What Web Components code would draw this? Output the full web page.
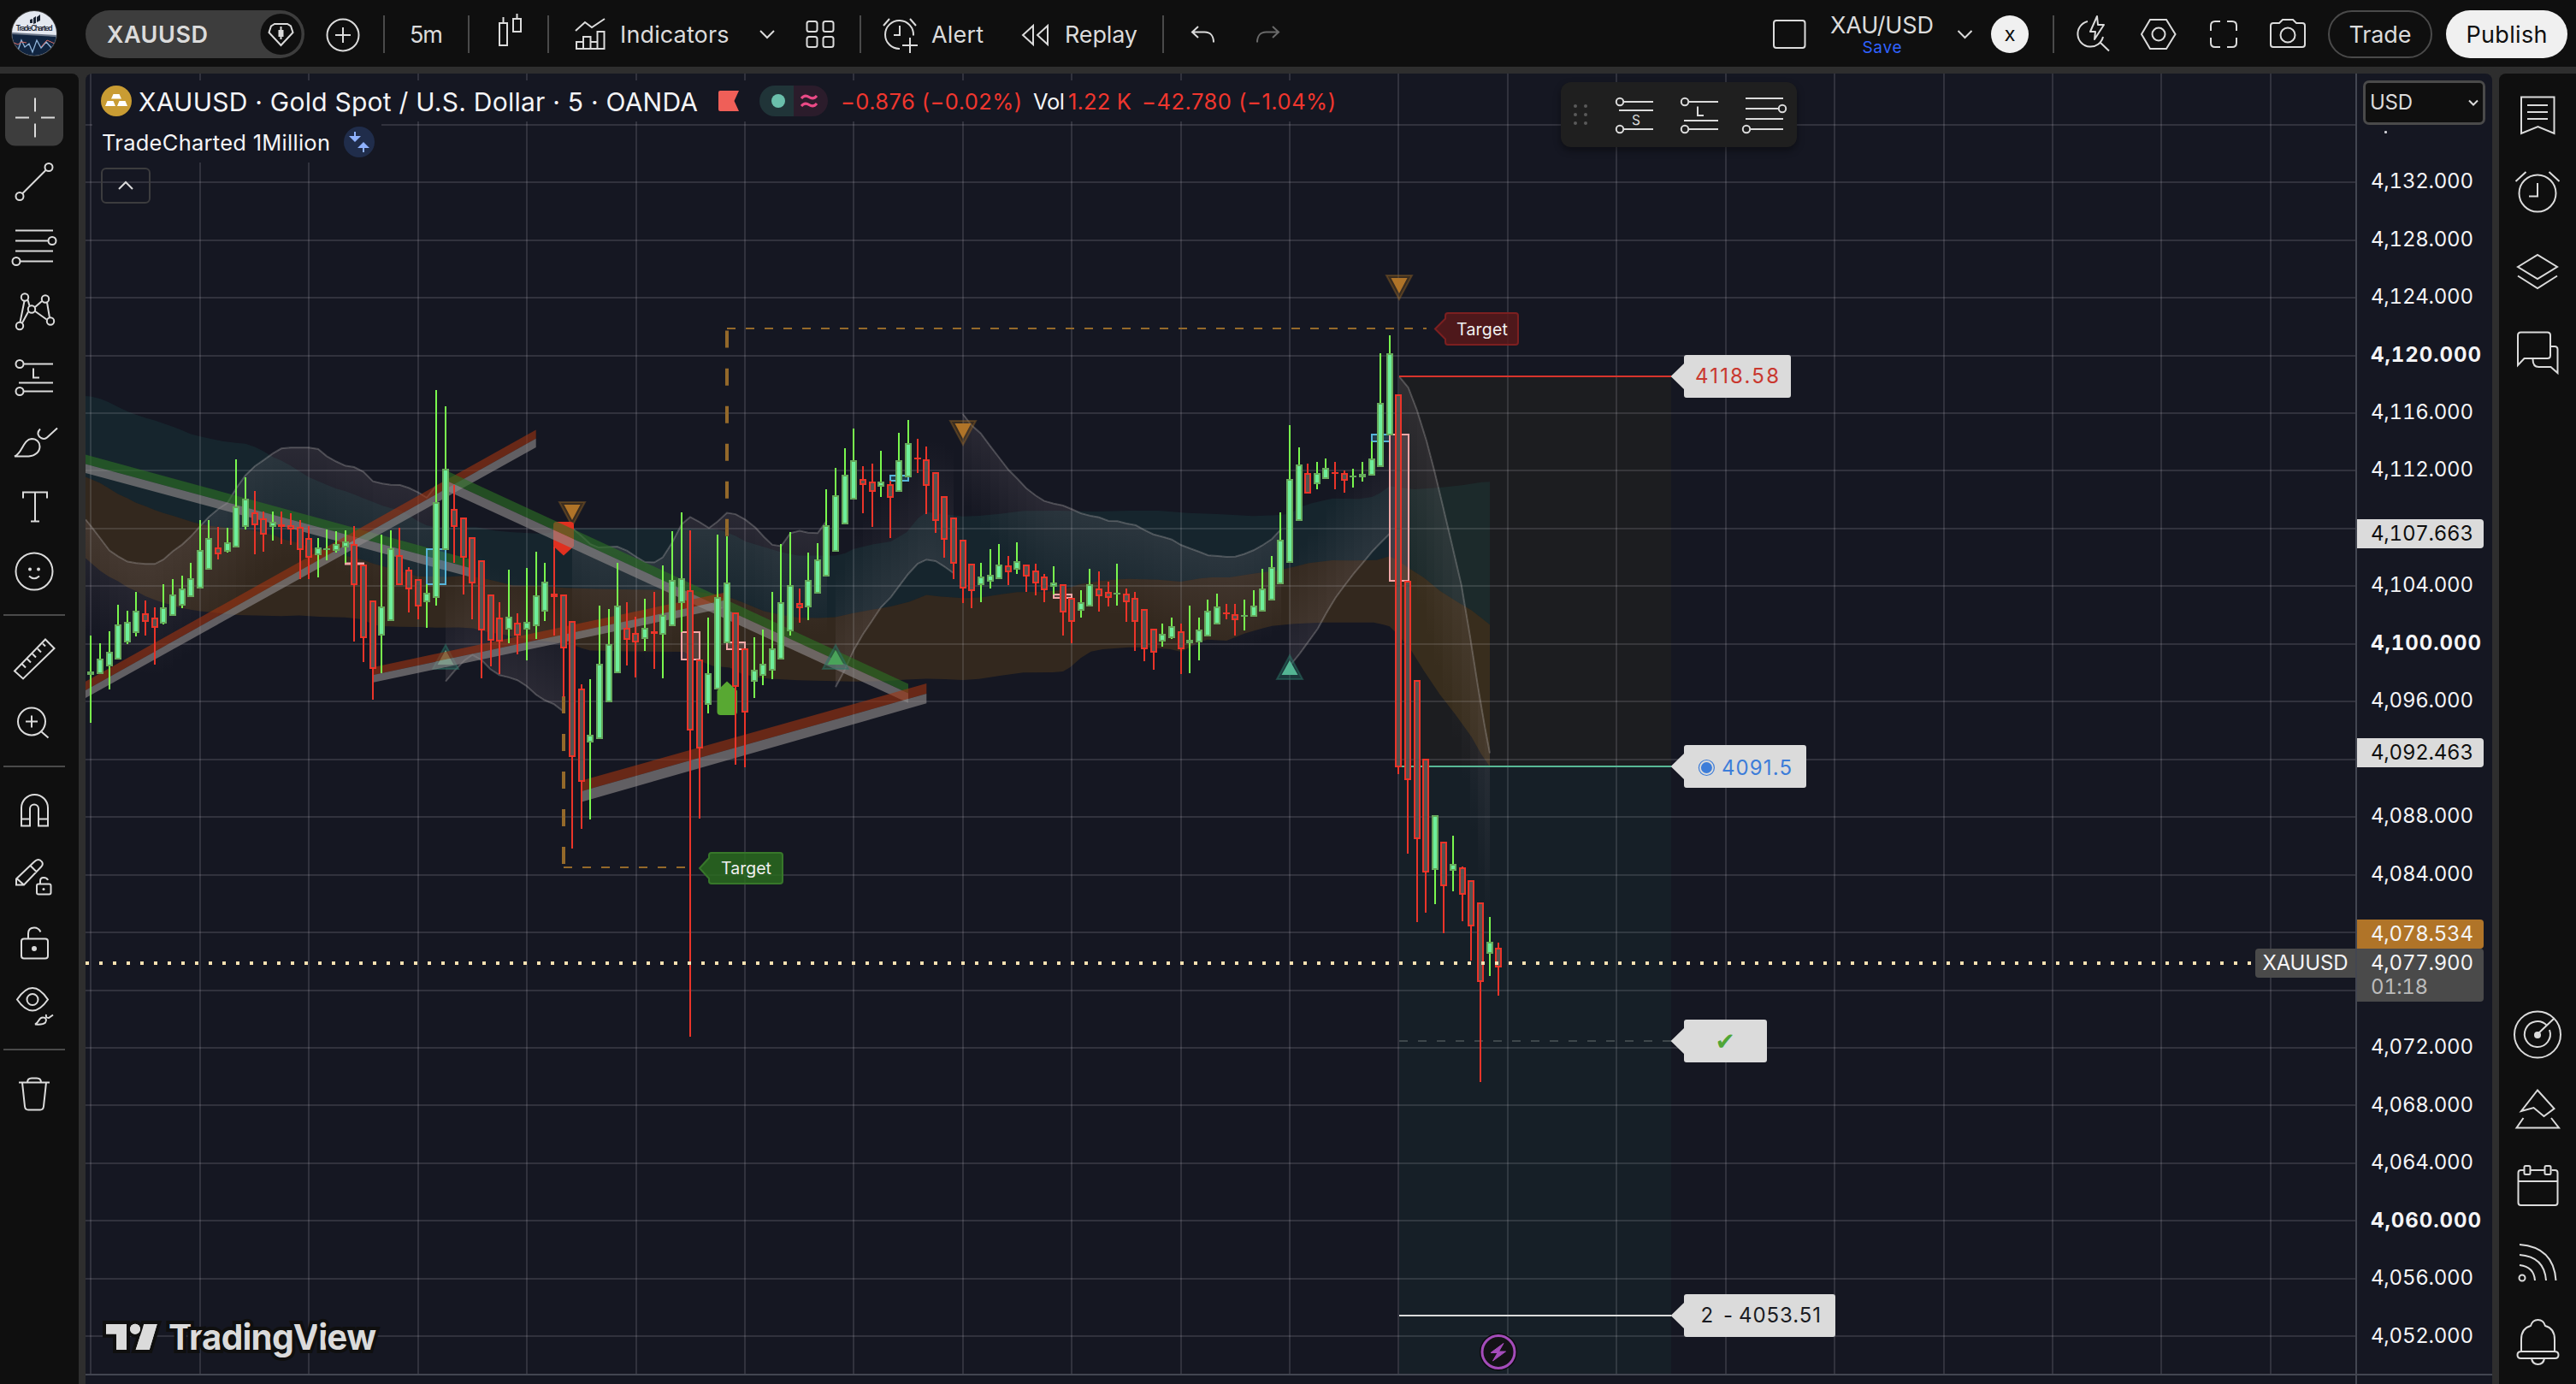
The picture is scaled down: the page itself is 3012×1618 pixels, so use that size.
<!DOCTYPE html>
<html lang="en">
<head>
<meta charset="utf-8">
<title>XAUUSD chart</title>
<style>
html,body{margin:0;padding:0;background:#2e2e2e}
body{width:3012px;height:1618px;overflow:hidden;font-family:Inter,"Liberation Sans",sans-serif;color:#dbdbdb}
</style>
</head>
<body>
<trading-app></trading-app>
<script>
/* ---------- text that keeps a fixed advance width ---------- */
class FitText extends HTMLElement{
  connectedCallback(){
    if(this.shadowRoot)return;
    this.attachShadow({mode:'open'}).innerHTML=`<style>
      :host{display:block;white-space:nowrap;flex:none;line-height:1.2}
      span{display:inline-block}</style><span><slot></slot></span>`;
    const w=+this.getAttribute('w'),n=this.textContent.length;
    if(!w)return;
    const s=this.shadowRoot.querySelector('span');
    const nat=s.getBoundingClientRect().width;
    this.style.width=w+'px';
    s.style.letterSpacing=((w-nat)/Math.max(1,n-1)).toFixed(3)+'px';
  }
}
customElements.define('fit-text',FitText);

/* ---------- icons: [viewBox, markup] ---------- */
const chev=(x,y,r=8)=>`<path d="M${x-r} ${y-r/2}L${x} ${y+r/2}L${x+r} ${y-r/2}"/>`;
const ICONS={
  avatar:['12 12 56 56',`<defs><clipPath id="c"><circle cx="40" cy="40" r="26"/></clipPath></defs>
    <circle cx="40" cy="40" r="27" fill="#3a3a3a" stroke="none"/>
    <g clip-path="url(#c)" stroke="none"><rect x="12" y="12" width="56" height="56" fill="#e4e8f0"/>
    <path d="M12 39L68 44V70H12Z" fill="#10243f"/><path d="M12 39L68 42V44L12 41Z" fill="#6b7688"/>
    <path d="M16 56l5 4 4-12 4 8 5-4 4 10 5-14 5 9 6-7 7 8" fill="none" stroke="#8fb3d8" stroke-width="1.3"/>
    <path d="M14 50l7 3 4-3 6 1M48 56l7-8 9 4" fill="none" stroke="#d86a62" stroke-width="1"/>
    <path d="M35 28v-4l3-1v5zM39 29v-7l3-2v8zM43 27v-6l4-3v7z" fill="#1a2230"/></g>
    <text x="18.500" y="37" font-size="8.500" font-weight="600" textLength="43" fill="#1c2534" stroke="none">TradeCharted</text>`],
  diamond:['304 12 50 56',`<circle cx="328.5" cy="40" r="24" fill="#0f0f0f" stroke="none"/><path d="M317 30.500l4-2.500h15l4 2.500 2.500 7.500-14 15-14-15z"/><rect x="325.500" y="35" width="6" height="8" fill="#dbdbdb" stroke="none"/><path d="M328.500 31v15"/>`],
  plus:['380 0 42 78','<circle cx="401" cy="41" r="18.500"/><path d="M392 41h18M401 32v18"/>'],
  candles:['580 0 32 78','<rect x="584" y="27" width="9" height="26"/><path d="M588.500 27v-7M604.500 22v-6"/><rect x="600" y="22" width="9" height="15"/>'],
  indicators:['670 0 40 78','<path d="M673 36l11-10 8 6 15-10M674 57V49h8V43h8.500V49h8V37h8v20zM682 57v-8M690.500 57v-8M698.500 57v-8"/>'],
  chevA:['888 0 18 78',chev(897,40)],
  grid:['942 0 35 78','<rect x="943.500" y="25" width="12" height="12" rx="2.500"/><rect x="962.500" y="25" width="12" height="12" rx="2.500"/><rect x="943.500" y="43" width="12" height="12" rx="2.500"/><rect x="962.500" y="43" width="12" height="12" rx="2.500"/>'],
  alert:['1030 0 46 78','<path d="M1068 41.500A16.500 16.500 0 1 0 1052 57M1045 41h7V30M1033 30l7-8M1071 30l-7-8M1064 44v18M1055 53h18"/>'],
  replay:['1194 0 33 78','<path d="M1208 30v22l-12-11zM1225 30v22l-12-11z"/>'],
  undo:['1392 0 30 78','<path d="M1401 31l-7 6.500 7 6.500M1394.500 37.500h14c7 0 10.500 5 10.500 12"/>'],
  redo:['1468 0 30 78','<g stroke="#6a6a6a"><path d="M1488 31l7 6.500-7 6.500M1494.500 37.500h-14c-7 0-10.500 5-10.500 12"/></g>'],
  square:['2072 0 40 78','<rect x="2074" y="24" width="36.500" height="32" rx="3"/>'],
  chevB:['2288 0 18 78',chev(2297.5,40)],
  flash:['2428 0 38 78','<path d="M2441 25a15 15 0 1 0 18 18M2455 49l11 10.500"/><path d="M2452 19l-8 18h6l-1 9 11-17h-7z" stroke-linejoin="round"/>'],
  hex:['2502 0 43 78','<path d="M2514 23h19l10.500 17-10.500 17h-19l-10-17z"/><circle cx="2524" cy="40" r="7.500"/>'],
  full:['2583 0 34 78','<path d="M2585 36v-6q0-5 5-5h6M2604 25h6q5 0 5 5v6M2615 44v6q0 5-5 5h-6M2596 55h-6q-5 0-5-5v-6"/>'],
  camera:['2653 0 44 78','<path d="M2655 30q0-3 3-3h7l4-4h12l4 4h7q3 0 3 3v22q0 3-3 3h-34q-3 0-3-3z"/><circle cx="2675" cy="41" r="8.500"/>'],

  cross:['0 98.500 92 76','<rect x="6" y="102" width="68" height="68" rx="12" fill="#3d3d3d" stroke="none"/><path d="M18 137h16M48 137h16M41 114v16M41 144v16"/>'],
  trend:['0 174.500 92 76','<circle cx="57" cy="195" r="4.500"/><circle cx="23" cy="229" r="4.500"/><path d="M26 226l28-28"/>'],
  fib:['0 250.500 92 76','<path d="M18 269h44M18 281h38M18 293h44M24 305h38"/><circle cx="61" cy="281" r="4.500"/><circle cx="19" cy="305" r="4.500"/>'],
  pattern:['0 326.500 92 76','<g><path d="M23.500 376L28.500 351.500M32.500 350l2 7M33 364L26 377M41 358.500l8-7M55 353l3 18M40.500 363l14 10"/><circle cx="29" cy="347" r="4.200"/><circle cx="53" cy="349" r="4.200"/><circle cx="37" cy="361" r="4.200"/><circle cx="23" cy="380.500" r="4.200"/><circle cx="59" cy="375" r="4.200"/></g>'],
  long:['0 402.500 92 76','<circle cx="23" cy="425" r="4.500"/><circle cx="23" cy="457" r="4.500"/><path d="M28 425h34M22 447h40M28 457h34M39 430v11h7"/>'],
  brush:['0 478.500 92 76','<path d="M17 533c9-3 10-20 20-20.500 6 0 9.500 4 9.500 9 0 6-5 11-13 11.500zM47 501c-4 4-3 8 1 10.500 3 1.500 5 1.500 7-.5l12-11"/>'],
  text:['0 554.500 92 76','<path d="M27 582v-7h28v7M41 575v34M36 609h10"/>'],
  smile:['0 630.500 92 76','<circle cx="40" cy="667.500" r="21.500"/><path d="M34 673q6 5.500 12 0"/><circle cx="35" cy="665" r="2" fill="#dbdbdb" stroke="none"/><circle cx="45" cy="665" r="2" fill="#dbdbdb" stroke="none"/>'],
  ruler:['0 731.500 92 76','<path d="M17 784l36-37 10.500 10.500-36.500 35.500zM26 776l4 4M32 770l4 4M38 764l4 4M44 758l4 4M50 752l3 3"/>'],
  zoomin:['0 807.500 92 76','<circle cx="37" cy="843" r="16"/><path d="M30 843h14M37 836v14M48.500 855l8 7"/>'],
  magnet:['0 908.500 92 76','<path d="M25 965V944a15.500 15.500 0 0 1 31 0v21H45v-20a5 5 0 0 0-10 0v20zM25 957h10M45 957h11"/>'],
  pencil:['0 984.500 92 76','<path d="M19 1034v-7l21-20q5-5 9 0 2 3-1 6l-20 21zM35 1011l8 8M19 1026l9 8"/><rect x="43" y="1033" width="16.500" height="12" rx="2"/><path d="M47 1033v-3.500q0-4 4-4t5 3"/><circle cx="51" cy="1039" r="1.500" fill="#dbdbdb" stroke="none"/>'],
  lock:['0 1060.500 92 76','<rect x="25" y="1097" width="31" height="23" rx="3"/><path d="M33 1097v-6q0-7 7-7 5 0 7.500 5"/><circle cx="40" cy="1108.500" r="3" fill="#dbdbdb" stroke="none"/>'],
  eye:['0 1136.500 92 76','<path d="M20 1168q18-27 36 0q-18 26-36 0z"/><circle cx="38" cy="1168" r="6.500"/><path d="M41 1197c5-2 4-8 9-8 4 0 5 3 3 6-2 2-6 2.500-12 2zM54 1185.500q-1 4 3 4l5-3.500"/>'],
  trash:['0 1239.500 92 76','<path d="M22 1265h36M32 1265q0-5 5-5h6q5 0 5 5M26 1265l3 28q.5 4 4 4h14q3.500 0 4-4l3-28"/>'],

  watch:['2922 98 90 74','<path d="M2948 113.500h38.500V156l-19-8-19.500 8zM2955 123h24M2955 131h24M2955 139h24"/>'],
  clock:['2922 187 90 74','<circle cx="2967" cy="226" r="21.500"/><path d="M2957 229.500h10V214M2941.500 212l12-11M2992.500 212l-12-11"/>'],
  layers:['2922 280 90 74','<path d="M2944 312l23-14 23 14-23 14zM2944 322.500l23 14.500 23-14.500"/>'],
  chat:['2922 374 90 74','<path d="M2944 427V392q0-3.500 3.500-3.500h31q3.500 0 3.500 3.500v23.500q0 3.500-3.500 3.500h-27zM2983 405h4q3.500 0 3.500 3.500V436l-8-7h-14q-7 0-7-9"/>'],
  radar:['2922 1172 90 74','<circle cx="2967" cy="1209.500" r="27"/><path d="M2986.500 1190.500l-20 19M2978 1199a15 15 0 1 0 3 5"/><circle cx="2967" cy="1210" r="4" fill="#dbdbdb" stroke="none"/>'],
  shapes:['2922 1260 90 74','<path d="M2967 1274.500l19.500 21.500-12 9-12-10-14.500 4zM2950.500 1307l-8 11.500h49.500l-9-11.500"/>'],
  calendar:['2922 1350 90 74','<path d="M2951.500 1368h-4q-3 0-3 3v35q0 3 3 3h40q3 0 3-3v-35q0-3-3-3h-4M2958.500 1368h17M2944.500 1381h46"/><rect x="2951.500" y="1363" width="7" height="10" rx="1.500"/><rect x="2975.500" y="1363" width="7" height="10" rx="1.500"/>'],
  rss:['2922 1440 90 74','<circle cx="2949" cy="1494" r="3.500"/><path d="M2946 1479q17 2 18 18M2946 1467q29 2 31 30M2946 1455q40 3 42.500 42"/>'],
  bell:['2922 1532 90 74','<path d="M2948 1580v-14q0-13 11-16 2-7 8.500-7t8.500 7q11 3 11 16v14M2948 1580q-4.500 0-4.500 4t4 4h40q4 0 4-4t-4.500-4zM2960 1588q1 7 7.500 7t7.500-7"/>'],

  grip:['1839 110 18 48','<g fill="#5a5a5a" stroke="none">'+[124,134,144].map(y=>`<circle cx="1842" cy="${y}" r="2"/><circle cx="1854" cy="${y}" r="2"/>`).join('')+'</g>'],
  shortpos:['1886 110 50 48','<circle cx="1894" cy="119" r="4.200"/><circle cx="1894" cy="151" r="4.200"/><path d="M1898 119h35M1893 129h40M1898 151h35"/><text x="1908" y="145.500" font-size="15.500" fill="#dbdbdb" stroke="none">S</text>'],
  longpos:['1962 110 50 48','<circle cx="1970" cy="119" r="4.200"/><circle cx="1970" cy="151" r="4.200"/><path d="M1974 119h35M1969 141h40M1974 151h35M1985 124.500v10.500h7"/>'],
  fibset:['2037 110 54 48','<path d="M2041 115h44M2041 127h38M2041 139h44M2047 151h38"/><circle cx="2084" cy="127" r="4.200"/><circle cx="2042" cy="151" r="4.200"/>'],

  gold:['118 100 36 36','<circle cx="136" cy="118" r="18" fill="#c99c33" stroke="none"/><path d="M132.500 110h7l2.500 5.500h-12zM125.500 118h7l2.500 6h-12zM139.500 118h7l2.500 6h-12z" fill="#fff" stroke="none"/>'],
  flag:['840 105 24 26','<path d="M842 106h22l-5.500 12 5.500 12h-22q-2 0-2-2v-20q0-2 2-2z" fill="#ef5f58" stroke="none"/>'],
  market:['888 100 80 36','<path d="M928 100h-22a18 18 0 0 0 0 36h22z" fill="#203438" stroke="none"/><path d="M928 100h22a18 18 0 0 1 0 36h-22z" fill="#2b1c2b" stroke="none"/><circle cx="910" cy="118" r="8" fill="#6abfab" stroke="none"/><path d="M937 115q4-5 9-1.500t9-1.500M937 124q4-5 9-1.500t9-1.500" stroke="#ea4a86" stroke-width="3"/>'],
  sync:['402 148 36 36','<circle cx="420" cy="166" r="18" fill="#202d4b" stroke="none"/><path d="M415 154v6M425 178v-6" stroke="#8fb2ff"/><path d="M408 159h14l-7 7zM418 173h14l-7-7z" fill="#8fb2ff" stroke="none"/>'],
  up:['118 196 58 42','<path d="M139 221l8-8 8 8"/>'],
  downS:['2884 110 14 20',chev(2891,120,5)]
};
class TvIcon extends HTMLElement{
  connectedCallback(){
    const [box,body]=ICONS[this.getAttribute('name')],[,,w,h]=box.split(' ');
    this.attachShadow({mode:'open'}).innerHTML=`<style>:host{display:block;flex:none;width:${w}px;height:${h}px}
      svg{display:block;overflow:visible;fill:none;stroke:#dbdbdb;stroke-width:2}</style>
      <svg width="${w}" height="${h}" viewBox="${box}">${body}</svg>`;
  }
}
customElements.define('tv-icon',TvIcon);

/* ---------- top bar ---------- */
const item=(gap,html)=>`<div style="margin-left:${gap}px">${html}</div>`;
const ic=(gap,n)=>item(gap,`<tv-icon name="${n}"></tv-icon>`);
const tx=(gap,w,t)=>item(gap,`<fit-text w="${w}">${t}</fit-text>`);
const sep=gap=>`<i style="margin-left:${gap}px"></i>`;
class TopBar extends HTMLElement{
  connectedCallback(){
    this.attachShadow({mode:'open'}).innerHTML=`<style>
    :host{display:flex;align-items:center;height:78px;background:#0f0f0f;font-size:27px;color:#dbdbdb}
    :host>div{flex:none}
    fit-text{padding-top:4px}
    i{flex:none;width:2px;height:44px;background:#4a4a4a;margin-top:2px}
    .pill{display:flex;align-items:center;width:256px;height:56px;border-radius:28px;background:#3d3d3d;box-sizing:border-box;padding-left:25px;font-weight:600;margin-top:2px}
    .pill fit-text,.btn fit-text{padding-top:2px}
    .pill tv-icon{margin-left:61px}
    .name{display:flex;flex-direction:column;align-items:center}
    .name .s{font-size:19px;color:#2f62ff;margin-top:-2px;padding:0}
    .x{width:44px;height:44px;border-radius:50%;background:#f0f0f0;color:#0f0f0f;font-size:24px;display:flex;align-items:center;justify-content:center;line-height:1;margin-top:2px}
    .btn{height:56px;border-radius:28px;box-sizing:border-box;display:flex;align-items:center;justify-content:center;margin-top:2px}
    .t{width:122px;border:2px solid #4a4a4a}.p{width:142px;background:#f0f0f0;color:#0f0f0f}
    </style>`+
    ic(12,'avatar')+item(32,`<div class="pill"><fit-text w="118">XAUUSD</fit-text><tv-icon name="diamond"></tv-icon></div>`)+
    ic(24,'plus')+sep(26)+tx(29,39,'5m')+sep(29)+ic(31,'candles')+sep(28)+ic(28,'indicators')+tx(15,127.5,'Indicators')+
    ic(35.5,'chevA')+ic(36,'grid')+sep(28)+ic(23,'alert')+tx(13,61,'Alert')+ic(44,'replay')+tx(18,85,'Replay')+sep(29)+
    ic(31,'undo')+ic(46,'redo')+ic(574,'square')+
    item(28,`<div class="name"><fit-text w="121">XAU/USD</fit-text><fit-text class="s" w="46">Save</fit-text></div>`)+
    ic(27,'chevB')+item(22,'<div class="x"><span>x</span></div>')+sep(28)+ic(26,'flash')+ic(36,'hex')+ic(38,'full')+ic(36,'camera')+
    item(25,'<div class="btn t"><fit-text w="73">Trade</fit-text></div>')+item(16,'<div class="btn p"><fit-text w="95">Publish</fit-text></div>');
  }
}
customElements.define('top-bar',TopBar);

/* ---------- left and right tool columns ---------- */
class ToolColumn extends HTMLElement{
  connectedCallback(){
    const list=this.getAttribute('icons').split(' ').map(n=>{
      if(n[0]==='+')return `<b style="height:${n.slice(1)}px"></b>`;
      if(n==='-')return '<hr>';
      return `<tv-icon name="${n}"></tv-icon>`;}).join('');
    this.attachShadow({mode:'open'}).innerHTML=`<style>:host{display:flex;flex-direction:column;flex:none;background:#0f0f0f;overflow:hidden}
      b{flex:none;display:block}hr{flex:none;border:0;margin:11.500px 16px 11.500px 4px;height:2px;background:#4a4a4a}</style>${list}`;
  }
}
customElements.define('tool-column',ToolColumn);

/* ---------- chart geometry ---------- */
const X=n=>Math.round(106.4+10.618*n);
const Y=p=>415.6+(4120-p)*16.862;
/* points in a local frame -> page pixels */
const frame=(ox,sx,oy,sy)=>s=>s.trim().split(' ').map(p=>{const [a,b]=p.split(',');return [+(ox+a/sx).toFixed(1),+(oy+b/sy).toFixed(1)];});
const A=frame(90,3,400,2.9037),B=frame(600,3,400,1.8447),C=frame(1100,2.9037,400,3),D=frame(1580,2.7034,300,2.529);
const str=p=>p.map(q=>q.join(',')).join(' ');

const bandTop=[...A('30,183 48,184 80,192 110,203 144,220 177,235 207,246 240,257 273,266 303,276 340,288 370,300 400,312 432,320 470,328 510,336 558,342 591,345 624,356 654,370 687,390 717,402 750,420 783,440 813,458 846,472 876,484 909,497 942,506 972,517 1005,530 1040,543 1070,555 1100,563 1133,570 1165,588 1197,608 1227,622 1260,628 1295,628 1400,628 1470,640'),
 ...B('0,410 100,413 130,411 170,404 200,401 450,401 700,402 735,407 780,418 815,430 880,442 940,453 1000,460 1068,460 1130,460 1165,455 1195,446 1260,436 1325,430 1380,410 1420,380 1450,366 1480,369'),
 ...C('14,604 75,611 130,609 200,602 280,592 400,591 520,594 640,591 740,591 840,599 940,603 1060,610 1140,607 1185,602 1220,578 1260,565 1330,548 1420,550 1464,543 1492,529 1524,505'),
 ...D('150,683 200,688 260,684 300,681 350,676 390,670 410,667 438,666')];
const bandMid=[...A('30,457 80,478 110,495 144,515 177,530 207,545 240,557 273,570 303,580 340,590 400,609 432,618 500,628 558,633 624,640 690,655 720,668 780,682 813,695 850,704 876,708 909,715 942,725 1005,740 1040,752 1100,768 1133,777 1165,786 1197,796 1260,795 1295,797 1360,793 1420,800 1470,812'),
 ...B('0,525 100,526 180,530 300,532 480,534 600,535 735,545 800,560 880,580 940,588 1000,594 1068,595 1130,593 1190,585 1250,578 1325,570 1390,560 1450,545 1500,549'),
 ...C('14,893 75,898 140,895 200,885 260,877 350,875 410,870 470,850 540,838 600,832 640,830 740,833 815,840 880,829 920,825 980,825 1040,815 1090,808 1140,802 1190,790 1250,775 1330,765 1400,766 1480,764 1524,751'),
 ...D('150,900 180,920 230,950 280,988 330,1018 380,1046 438,1088')];
const bandLow=[...A('30,733 80,775 110,795 144,812 177,832 207,845 240,862 273,875 303,885 336,893 369,903 399,908 432,913 500,920 560,926 624,928 717,930 780,928 850,932 940,934 975,938 1005,942 1040,960 1070,964 1130,966 1200,967 1260,969 1340,968 1390,971 1420,979 1450,986 1500,993'),
 ...B('0,636 100,644 207,652 240,660 270,665 400,667 600,668 640,684 700,698 760,702 800,715 850,722 900,726 1000,729 1190,732 1300,731 1380,728 1450,726'),
 ...C('14,1182 75,1185 130,1181 200,1170 280,1159 380,1158 415,1155 440,1140 475,1108 510,1085 550,1077 640,1070 700,1071 780,1077 816,1086 845,1070 870,1055 905,1043 970,1047 1000,1035 1030,1022 1065,1012 1090,1004 1125,995 1200,988 1300,983 1470,983 1500,990 1524,997'),
 ...D('150,1120 190,1165 230,1225 280,1295 330,1355 380,1420 410,1470 438,1508')];

/* trailing line segments: points, fade direction, fade length */
const trails=[
 [A('30,602 48,623 81,665 114,707 144,727 177,745 207,750 240,753 273,753 303,738 336,710 369,687 399,660 432,625 462,594 495,567 528,545 558,497 591,452 624,421 654,401 687,378 717,361 750,358 783,358 813,358 846,363 876,387 909,405 942,420 972,424 1005,440 1038,472 1070,480 1100,484 1133,485 1165,495 1197,510 1227,528 1260,487'),1,130],
 [[...A('1293,1152 1325,1115 1360,1080 1387,1062 1420,1080 1450,1110 1482,1130 1515,1138'),...B('15,729 48,742 80,760 110,772 144,781 177,797')],-1,120],
 [B('207,401 240,418 270,435 300,443 333,442 365,441 400,450 432,463 462,474 495,475 525,464 558,432 591,393 621,377 654,388 687,401 717,387 750,368 780,371 815,383 850,400 880,420 909,437 940,440 972,412 1005,407 1034,411 1068,412 1100,385'),1,120],
 [[...B('1131,744 1164,706 1194,665 1227,630 1260,600 1290,572 1325,550 1355,525 1386,500 1419,478 1450,469 1482,472 1515,485'),...C('14,788 43,810')],-1,140],
 [C('75,252 105,292 136,320 168,365 198,405 230,448 261,480 290,512 322,538 351,557 383,566 415,573 443,585 475,600 508,609 537,614 569,627 600,628 630,636 662,642 690,658 722,674 755,683 784,692 815,711 845,723 877,735 908,748 940,750 970,753 1000,752 1030,743 1062,730 1090,714 1125,690 1156,655'),1,110],
 [C('1185,1135 1217,1095 1245,1055 1280,1005 1309,950 1340,897 1370,855 1402,812 1432,775 1464,735 1492,705 1524,672'),-1,130],
 [D('152,355 180,387 208,455 238,545 263,635 290,740 318,850 348,970 375,1120 400,1270 422,1390 438,1468'),1,230]];

/* candles: colour, high, body top, body bottom, low */
const feed=(n0,oy,sy,s)=>s.trim().split(/\s+/).map((r,i)=>{
  const c=r[0],v=r.slice(1).split(',').map(q=>Math.round(oy+q/sy));return {n:n0+i,c,h:v[0],t:v[1],b:v[2],l:v[3]};});
const candles=[
...feed(0,400,2.9037,`g996,1118,1130,1292 g1022,1074,1127,1127 g981,1051,1101,1179 g891,958,1077,1077 g912,950,1019,1025 g848,912,987,999 r877,920,949,996 r900,935,970,1095
g822,900,955,958 g804,858,929,929 g793,836,894,903 g749,801,865,865 g604,706,836,836 g604,665,772,772 r627,697,720,738 g630,679,711,714
g398,558,697,697 g459,531,627,636 r505,577,621,720 r575,598,653,711 g575,610,627,674 r575,618,627,685 r581,621,636,688 r604,627,706,804
r624,665,732,804 g665,697,723,799 g636,700,706,740 g642,685,709,714 g639,677,697,750 r624,686,825,1016 r755,755,1004,1086 r877,877,1109,1214
g653,897,996,1124 g639,700,947,947 r630,723,825,825 r764,772,839,918 r804,804,897,941 g822,851,883,970 g163,543,868,894 g218,430,706,706
r485,566,627,749 r595,595,732,857 r662,662,819,941 r740,740,979,1141 r857,857,1013,1101 r883,935,1016,1127 g772,932,976,1022`),
...feed(47,400,1.8447,`r585,605,633,673 g487,604,620,686 g452,546,612,640 g476,517,581,601 r440,542,550,633 r544,544,660,765 r601,601,895,1092 r738,747,948,1050
g727,847,863,1029 g568,694,856,856 g576,651,777,777 g476,568,714,714 r561,617,642,697 r592,628,647,723 g553,617,641,666 r539,624,629,705
g481,589,631,725 g408,513,612,612 g367,509,563,625 r406,535,837,1498 r684,684,876,1028 g594,714,782,801 g415,549,749,749 g419,518,649,649
r583,583,743,911 r661,661,799,917 g636,707,732,767 g620,694,719,740 g539,660,708,727 g435,561,684,684 g410,524,624,633 r531,563,574,605
g454,513,571,600 g434,469,542,542 g317,395,505,505 g271,330,452,452 g229,286,393,393 g186,255,339,339 r267,296,308,369 r262,300,323,398
g234,301,312,334 r299,306,335,422 g196,255,323,323 g168,218,291,291 r208,249,253,282 r225,253,310,371 r280,280,385,411 r332,332,426,465 r378,378,478,511`),
...feed(96,400,3,`r693,693,864,915 r777,777,873,933 g774,822,852,912 g726,816,840,864 g708,780,831,831 r750,783,807,852 g702,768,798,813 r780,780,822,876
r777,801,846,888 r813,822,870,912 g786,843,858,885 r849,849,948,1029 r897,897,981,1056 g870,912,942,966 g795,849,927,927 r804,864,891,945
r840,876,897,927 g777,879,885,924 r864,882,912,981 r876,897,981,1083 r936,936,1077,1119 r1005,1005,1089,1149 g987,1023,1050,1068 g966,996,1038,1041
r987,1014,1077,1164 g924,1044,1056,1161 g966,1008,1053,1116 g903,942,1032,1032 g882,927,990,990 r918,948,954,972 r918,954,975,1029 g903,957,963,1011
g870,924,963,963 g795,864,945,945 g750,789,906,906 g597,693,849,849 g291,480,774,774 g369,429,627,627 r426,459,531,531 g420,459,498,516
g408,441,480,480 r420,456,462,516 r450,459,486,528 g444,468,474,510 g420,462,474,489 g348,408,468,468 g39,213,438,438`),
...feed(143,300,2.529,`g233,286,529,529`),
...feed(144,880,2.1247,`r-890,-890,36,53 r-427,-427,68,251 r-180,-180,215,421 r15,15,297,397 g155,155,291,376 r221,221,331,448 g206,276,293,344 r283,285,353,419
r317,317,431,516 r372,372,569,818 g408,470,500,555 r472,484,533,603`)];

class PriceChart extends HTMLElement{
  connectedCallback(){
    let g='';
    for(let k=0;k<=20;k++)g+=`<rect x="${Math.round(106.4+127.42*k)-1}" y="86" width="2" height="1520"/>`;
    for(let p=4136;p>=4052;p-=4)g+=`<rect x="100" y="${Math.round(Y(p))-1}" width="2655" height="2"/>`;
    let f='',ln='';
    for(const [p,dir,len] of trails){
      for(let i=0;i<p.length-1;i++){
        const [x0,y0]=p[i],[x1,y1]=p[i+1],e=y0+dir*len;
        f+=`<path d="M${x0} ${y0}L${x1} ${y1}V${e}H${x0}Z" fill="url(#${dir>0?'fd':'fu'})"/>`;
      }
      ln+=`<polyline points="${str(p)}"/>`;
    }
    let c='';
    for(const {n,c:k,h,t,b,l} of candles){
      const x=X(n),w=k==='g'?'#79f74e':'#ea3429',o=k==='g'?'#66a95c':'#ea3429',inn=k==='g'?'#6eef9b':'#545250',H=Math.max(2,b-t);
      c+=`<path d="M${x-1} ${h}h2V${Math.max(l,b)}h-2z" fill="${w}"/><rect x="${x-4}" y="${t}" width="8" height="${H}" fill="${o}"/>`;
      if(H>4)c+=`<rect x="${x-2}" y="${t+2}" width="4" height="${H-4}" fill="${inn}"/>`;
    }
    const ch=(x0,x1,a,b,col)=>{const s=(i,fill)=>`<path d="M${x0} ${a[i]}L${x1} ${b[i]}V${b[i+1]}L${x0} ${a[i+1]}Z" fill="${fill}"/>`;
      return s(0,col)+s(1,'rgba(142,138,138,.63)');};
    const R='rgba(160,52,17,.6)',G='rgba(44,112,36,.62)';
    const trend=ch(100,550,[531.6,542.6,553],[653.8,664,674.5],G)+ch(100,626.7,[796.7,807,816],[502.5,512.8,523],R)
      +ch(521,1062,[549.8,561.5,573],[799.5,810.5,821.7],G)+ch(436.7,846,[779.9,789,797.8],[693,702,711],R)
      +ch(681,1083.3,[912.3,924.7,937.2],[799,811,822.3],R);
    const box=(x,y,w,h,s)=>`<rect x="${x}" y="${y}" width="${w}" height="${h}" fill="${s==='b'?'rgba(60,150,190,.28)':'rgba(215,150,160,.22)'}" stroke="${s==='b'?'#56b4d8':'#f2a7a7'}" stroke-width="2"/>`;
    const dn=(x,y)=>`<path d="M${x-15} ${y+1}H${x+15}L${x} ${y+29}Z" fill="rgba(130,85,30,.35)" stroke="rgba(170,115,40,.35)" stroke-width="2"/><path d="M${x-9.500} ${y+4}H${x+9.500}L${x} ${y+22}Z" fill="#b07428"/>`;
    const upm=(x,y,col)=>`<path d="M${x-15} ${y+30}H${x+15}L${x} ${y+2}Z" fill="rgba(40,110,100,.4)" stroke="rgba(45,120,105,.45)" stroke-width="2"/><path d="M${x-9.500} ${y+25}H${x+9.500}L${x} ${y+8}Z" fill="${col}"/>`;
    const flag=(x,y,w,h,tip,fill,st)=>`<path d="M${tip} ${y+h/2}L${x} ${y+h/2-12}V${y+3}q0-3 3-3H${x+w-3}q3 0 3 3V${y+h-3}q0 3-3 3H${x+3}q-3 0-3-3V${y+h/2+12}Z" fill="${fill}" ${st?`stroke="${st}" stroke-width="2"`:''}/>`;
    const tag=(y,w)=>`<path d="M1953.600 ${y}L1969 ${y-15}V${y-22}q0-3 3-3H${1969+w-3}q3 0 3 3V${y+22}q0 3-3 3H1972q-3 0-3-3V${y+15}Z" fill="#dbdbdb"/>`;
    this.attachShadow({mode:'open'}).innerHTML=`<style>:host{display:block}svg{display:block}text{font-family:Inter,"Liberation Sans",sans-serif}</style>
    <svg width="2814" height="1532" viewBox="100 86 2814 1532">
    <defs><linearGradient id="fd" x2="0" y2="1"><stop stop-color="#b9a5ad" stop-opacity=".13"/><stop offset="1" stop-color="#b9a5ad" stop-opacity="0"/></linearGradient>
    <linearGradient id="fu" x2="0" y1="1" y2="0"><stop stop-color="#b9a5ad" stop-opacity=".13"/><stop offset="1" stop-color="#b9a5ad" stop-opacity="0"/></linearGradient></defs>
    <rect x="1636" y="440" width="318" height="456" fill="rgba(100,85,15,.1)"/><rect x="1636" y="896" width="318" height="710" fill="rgba(38,120,100,.09)"/>
    <polygon points="${str(bandTop)} ${str([...bandMid].reverse())}" fill="rgba(33,150,130,.115)"/>
    <polygon points="${str(bandMid)} ${str([...bandLow].reverse())}" fill="rgba(180,118,18,.19)"/>
    <g fill="rgba(220,220,230,.14)" shape-rendering="crispEdges">${g}</g>
    <g shape-rendering="crispEdges">${f}</g><g fill="none" stroke="rgba(190,185,185,.3)" stroke-width="2">${ln}</g>
    <g fill="none" stroke="#94692a"><path d="M850 386.600V627" stroke-width="4" stroke-dasharray="20 24.050"/><path d="M659 814V1011" stroke-width="4" stroke-dasharray="20 24"/>
    <path d="M850 384H1668M659 1014H801" stroke-width="2" stroke-dasharray="10 12"/></g>
    ${upm(521,752,'#60b088')}${upm(1508,764,'#53b593')}${dn(669,586)}
    <path d="M651 610h16q4 0 4 4v24.500L659 649.500 647 638.500V614q0-4 4-4z" fill="#df3020"/>
    <path d="M838.500 807.500L850 796.500l12 11V832q0 4-4 4h-15.500q-4 0-4-4z" fill="#58a832"/>
    ${trend}${upm(977,752,'#4aa35a')}${dn(1126,491)}${dn(1636,321)}
    ${box(499,642,22,41,'b')}${box(1041,556,21,6,'b')}${box(1604,508,21,8,'b')}<path d="M403 659h23" stroke="#f2a7a7" stroke-width="3"/>
    ${box(797,739,21,32,'p')}${box(850,751,21,8,'p')}${box(1232,695,21,4,'p')}${box(1625,508,22,171,'p')}
    <path d="M1636 440H1954" stroke="#d8342c" stroke-width="2"/><path d="M1636 896H1954" stroke="#58b896" stroke-width="2"/>
    <path d="M1636 1217H1954" stroke="#3e474b" stroke-width="2" stroke-dasharray="10 12"/><path d="M1636 1538H1954" stroke="#dbdbdb" stroke-width="2"/>
    <g shape-rendering="crispEdges">${c}</g>
    <path d="M100 1126H2640" stroke="#fbe2b2" stroke-width="4" stroke-dasharray="4 12"/>
    ${flag(829,997,86,36,818,'rgba(43,108,30,.82)','#37772a')}${flag(1690,366,85,37,1678,'rgba(92,24,26,.82)','#7c1f20')}
    <g font-size="19.500" fill="#f0f0f0"><text x="843" y="1022" textLength="59">Target</text><text x="1703" y="392" textLength="60">Target</text></g>
    ${tag(440,125)}${tag(896,143)}${tag(1217,97)}${tag(1538,177)}
    <g font-size="24"><text x="1982" y="448" textLength="98" fill="#c9382f">4118.58</text>
    <text x="2013" y="905.500" textLength="82" fill="#3d7dd9">4091.5</text><circle cx="1995.400" cy="897.500" r="9" fill="none" stroke="#3d7dd9" stroke-width="1.200"/><circle cx="1995.400" cy="897.500" r="6.500" fill="#3d7dd9"/>
    <text x="2005.500" y="1227" font-size="28" fill="#4fa636" style="font-family:'DejaVu Sans'">✔</text>
    <g fill="#1a1b22"><text x="1988.500" y="1546">2</text><text x="2015" y="1546">-</text><text x="2033" y="1546" textLength="96">4053.51</text></g></g>
    <circle cx="1752" cy="1580.500" r="22" fill="#0c0c0f"/><circle cx="1752" cy="1580.500" r="19" fill="#131216" stroke="#a44cba" stroke-width="3"/>
    <path d="M1758 1570.500l-15 11h8l-5.500 9.500 15-11h-8z" fill="#a44cba" stroke="#a44cba" stroke-linejoin="round"/>
    <g fill="#dbdbdb" stroke="#0f0f0f" stroke-width="8" paint-order="stroke"><path d="M124 1548h24v30h-12v-18.300h-12zM168.300 1548h15.400l-9 30h-16z"/><circle cx="158" cy="1553.700" r="6"/>
    <text x="197" y="1578" font-size="41" font-weight="700" textLength="243">TradingView</text></g><path d="M168.300 1548h15.400l-9 30h-16z" fill="#dbdbdb"/><circle cx="158" cy="1553.700" r="6" fill="#dbdbdb"/>
    <path d="M100 1607H2914" stroke="#434651" stroke-width="2"/><path d="M2755 86V1618" stroke="#434651" stroke-width="2"/>
    </svg>`;
  }
}
customElements.define('price-chart',PriceChart);

/* ---------- legend over the chart ---------- */
class ChartLegend extends HTMLElement{
  connectedCallback(){
    this.attachShadow({mode:'open'}).innerHTML=`<style>
    :host{position:absolute;left:8px;top:8px;display:flex;flex-direction:column;align-items:flex-start;color:#f4f4f6}
    .r{display:flex;align-items:center;height:48px;background:#151722;padding:0 8px 0 10px;font-size:25.500px}
    .r>*{flex:none}.r fit-text{padding-top:2px}.t{font-size:30px;margin-left:8px}.red{color:#f0362e}
    .b{box-sizing:border-box;width:58px;height:42px;margin:6px 0 0 10px;border:2px solid #3c3c3e;border-radius:6px}
    .b tv-icon{margin:-2px}
    </style>
    <div class="r"><tv-icon name="gold"></tv-icon><fit-text class="t" w="654">XAUUSD · Gold Spot / U.S. Dollar · 5 · OANDA</fit-text>
    <tv-icon name="flag" style="margin-left:24px"></tv-icon><tv-icon name="market" style="margin-left:24px"></tv-icon>
    <fit-text class="red" w="212" style="margin-left:15px">−0.876 (−0.02%)</fit-text><fit-text w="37" style="margin-left:13px">Vol</fit-text>
    <fit-text class="red" w="74" style="margin-left:4px">1.22 K</fit-text><fit-text class="red" w="227" style="margin-left:12px">−42.780 (−1.04%)</fit-text></div>
    <div class="r"><fit-text w="267" style="margin-left:1px">TradeCharted 1Million</fit-text><tv-icon name="sync" style="margin-left:16px"></tv-icon></div>
    <div class="b"><tv-icon name="up"></tv-icon></div>`;
  }
}
customElements.define('chart-legend',ChartLegend);

class FloatingBar extends HTMLElement{
  connectedCallback(){
    this.attachShadow({mode:'open'}).innerHTML=`<style>:host{position:absolute;left:1725px;top:10px;width:276px;height:76px;box-sizing:border-box;padding-left:14px;
      display:flex;align-items:center;background:#1f1f1f;border-radius:12px;box-shadow:0 4px 8px rgba(0,0,0,.4)}</style>
      <tv-icon name="grip"></tv-icon><tv-icon name="shortpos" style="margin-left:29px"></tv-icon><tv-icon name="longpos" style="margin-left:26px"></tv-icon><tv-icon name="fibset" style="margin-left:25px"></tv-icon>`;
  }
}
customElements.define('floating-bar',FloatingBar);

/* ---------- price scale ---------- */
class PriceScale extends HTMLElement{
  connectedCallback(){
    const hide=new Set([4108,4092,4080,4076]);let rows='';
    for(let p=4132;p>=4052;p-=4){
      const s='4,'+String(p).slice(1)+'.000',b=p%20===0&&!hide.has(p);
      rows+=`<div class="row">${hide.has(p)?'':`<fit-text w="${b?129:120}" ${b?'class="b"':''}>${s}</fit-text>`}</div>`;
    }
    this.attachShadow({mode:'open'}).innerHTML=`<style>
    :host{position:absolute;left:2656px;top:0;width:158px;height:1532px;font-size:24px;font-variant-numeric:tabular-nums;color:#f4f4f6}
    .col{display:flex;flex-direction:column;padding-top:92.800px}
    .row{height:67.480px;padding-left:16px;display:flex;align-items:center;flex:none}.b{font-weight:700}
    .cur{position:absolute;left:7px;top:8px;width:143px;height:52px;box-sizing:border-box;border:3px solid #4a4a4a;border-radius:7px;background:#0f0f0f;color:#dbdbdb;display:flex;align-items:center;justify-content:space-between;padding:0 4px 0 5px}
    .cur fit-text{padding-top:1px}
    .tag{position:absolute;left:0;width:148px;height:34px;border-radius:0 4px 4px 0;box-sizing:border-box;padding-left:16px;display:flex;align-items:center}
    .sym{position:absolute;left:-119px;top:1023px;width:117px;height:34px;border-radius:4px 0 0 4px;background:#4a4a4a;display:flex;align-items:center;justify-content:center}
    .peek{position:absolute;width:3px;height:3px;background:#cfd0d6;border-radius:1px}
    </style>
    <div class="col">${rows}</div>
    <i class="peek" style="left:32px;top:67px"></i>
    <div class="cur"><fit-text w="50">USD</fit-text><tv-icon name="downS"></tv-icon></div>
    <div class="tag" style="top:521px;background:#dbdbdb;color:#0f0f0f"><fit-text w="120">4,107.663</fit-text></div>
    <div class="tag" style="top:777px;background:#dbdbdb;color:#0f0f0f"><fit-text w="120">4,092.463</fit-text></div>
    <div class="tag" style="top:989px;background:#b07428"><fit-text w="120">4,078.534</fit-text></div>
    <div class="tag" style="top:1023px;height:62px;background:#4a4a4a;flex-direction:column;align-items:flex-start;padding-top:3px"><fit-text w="120">4,077.900</fit-text><fit-text w="67" style="color:#bcbcbc;margin-top:-1px">01:18</fit-text></div>
    <div class="sym"><fit-text w="100">XAUUSD</fit-text></div>`;
  }
}
customElements.define('price-scale',PriceScale);

class TradingApp extends HTMLElement{
  connectedCallback(){
    this.attachShadow({mode:'open'}).innerHTML=`<style>
    :host{display:flex;flex-direction:column;gap:8px;width:3012px;height:1618px;background:#2e2e2e}
    main{display:flex;gap:8px;flex:1;min-height:0}
    .l{width:92px;border-radius:0 8px 0 0}.r{width:90px;border-radius:8px 0 0 0}
    section{position:relative;width:2814px;background:#151722;border-radius:8px 8px 0 0;overflow:hidden;flex:none}
    </style>
    <top-bar></top-bar>
    <main>
      <tool-column class="l" icons="+12.5 cross trend fib pattern long brush text smile - ruler zoomin - magnet pencil lock eye +2 - trash"></tool-column>
      <section><price-chart></price-chart><price-scale></price-scale><chart-legend></chart-legend><floating-bar></floating-bar></section>
      <tool-column class="r" icons="+12 watch +15 clock +19 layers +20 chat +724 radar +14 shapes +16 calendar +16 rss +18 bell"></tool-column>
    </main>`;
  }
}
customElements.define('trading-app',TradingApp);
</script>
</body>
</html>
